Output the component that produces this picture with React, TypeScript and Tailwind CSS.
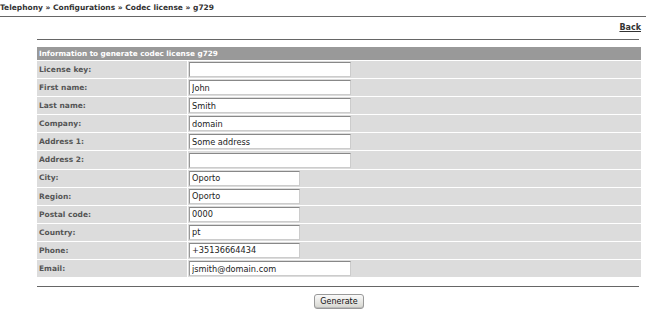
import React from 'react'

interface Field {
  label: string
  value: string
  short?: boolean
}

const fields: Field[] = [
  { label: 'License key:', value: '' },
  { label: 'First name:', value: 'John' },
  { label: 'Last name:', value: 'Smith' },
  { label: 'Company:', value: 'domain' },
  { label: 'Address 1:', value: 'Some address' },
  { label: 'Address 2:', value: '' },
  { label: 'City:', value: 'Oporto', short: true },
  { label: 'Region:', value: 'Oporto', short: true },
  { label: 'Postal code:', value: '0000', short: true },
  { label: 'Country:', value: 'pt', short: true },
  { label: 'Phone:', value: '+35136664434', short: true },
  { label: 'Email:', value: 'jsmith@domain.com' },
]

export default function App() {
  return (
    <div className="w-[646px] h-[318px] bg-white font-['DejaVu_Sans',sans-serif] overflow-hidden">
      {/* Breadcrumb */}
      <div className="h-[17px] border-b border-[#666] pt-[3px] text-[7.5px] font-bold text-[#333] leading-[10px]">
        Telephony » Configurations » Codec license » g729
      </div>

      <div className="pl-[37px] pr-[5px]">
        <div className="flex justify-end h-[22px] items-center">
          <a href="#" className="text-[8px] font-bold text-[#333] underline">Back</a>
        </div>
        <div className="border-t border-[#666] mr-[2px]"></div>

        {/* Form table */}
        <div className="mt-[7px]">
          <div className="h-[13px] bg-[#999] text-white text-[7.25px] font-bold pl-[2px] leading-[13px]">
            Information to generate codec license g729
          </div>
          {fields.map((f) => (
            <div key={f.label} className="flex mt-[1px] h-[17.1px]">
              <div className="w-[150px] bg-[#dcdcdc] text-[#555] text-[7.5px] font-bold pl-[2px] flex items-center">
                {f.label}
              </div>
              <div className="flex-1 ml-[1px] bg-[#dcdcdc] flex items-center pl-[1px]">
                <input
                  readOnly
                  value={f.value}
                  className={`${f.short ? 'w-[111px]' : 'w-[162px]'} h-[15px] bg-white border border-[#ccc] border-t-[#888] border-l-[#999] text-[8.2px] text-[#222] px-[2px] outline-none`}
                />
              </div>
            </div>
          ))}
        </div>

        <div className="border-t border-[#666] mr-[2px] mt-[9px]"></div>
        <div className="flex justify-center mt-[7px]">
          <button className="h-[15px] px-[5px] rounded-[3px] border border-[#999] bg-gradient-to-b from-[#fafafa] to-[#d6d6d0] text-[8px] text-[#111] leading-[12px] shadow-[inset_0_-1px_0_#bbb]">
            Generate
          </button>
        </div>
      </div>
    </div>
  )
}
